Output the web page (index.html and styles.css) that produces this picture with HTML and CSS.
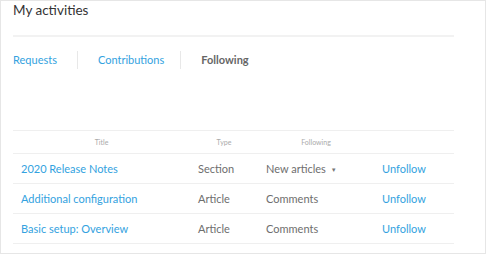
FILE: index.html
```html
<!DOCTYPE html>
<html lang="en">
<head>
    <meta charset="UTF-8">
    <meta name="viewport" content="width=device-width, initial-scale=1.0">
    <title>My activities</title>
    <link rel="stylesheet" href="styles.css">
</head>
<body>
    <div class="card">
        <h2 class="card-title">My activities</h2>
        <nav class="tabs">
            <a href="#" class="tab">Requests</a>
            <a href="#" class="tab">Contributions</a>
            <span class="tab active">Following</span>
        </nav>
        <table class="activity-table">
            <thead>
                <tr>
                    <th class="col-title">Title</th>
                    <th class="col-type">Type</th>
                    <th class="col-following">Following</th>
                    <th class="col-action"></th>
                </tr>
            </thead>
            <tbody>
                <tr>
                    <td><a href="#">2020 Release Notes</a></td>
                    <td>Section</td>
                    <td>New articles <span class="caret">&#9660;</span></td>
                    <td><a href="#">Unfollow</a></td>
                </tr>
                <tr>
                    <td><a href="#">Additional configuration</a></td>
                    <td>Article</td>
                    <td>Comments</td>
                    <td><a href="#">Unfollow</a></td>
                </tr>
                <tr>
                    <td><a href="#">Basic setup: Overview</a></td>
                    <td>Article</td>
                    <td>Comments</td>
                    <td><a href="#">Unfollow</a></td>
                </tr>
            </tbody>
        </table>
    </div>
</body>
</html>
```

FILE: styles.css
```css
body {
    font-family: Lato, "Noto Sans", sans-serif;
    background: #fff;
    margin: 0;
}
a {
    color: #33a2e0;
    text-decoration: none;
}
.card {
    box-sizing: border-box;
    height: 254px;
    border: 1px solid #e6e6e6;
    padding: 0 31px 0 12px;
}
.card-title {
    margin: 0;
    font-size: 13.5px;
    font-weight: normal;
    color: #333;
    line-height: 19px;
    padding-bottom: 15px;
    border-bottom: 2px solid #f2f2f2;
}
.tabs {
    display: flex;
    margin-top: 14px;
    line-height: 18px;
    font-size: 11px;
}
.tab {
    padding: 0 16px 0 20px;
    border-left: 1px solid #e8e8e8;
}
.tab:first-child {
    padding-left: 0;
    padding-right: 20px;
    border-left: none;
}
.tab.active {
    color: #666;
    font-weight: bold;
}
.activity-table {
    width: 100%;
    table-layout: fixed;
    margin-top: 61px;
    border-collapse: collapse;
    border-top: 1px solid #efefef;
    font-size: 11px;
    color: #6e6e6e;
}
.activity-table th,
.activity-table td {
    box-sizing: border-box;
    padding: 0 8px;
    border-bottom: 1px solid #efefef;
}
.activity-table th {
    font-size: 7px;
    font-weight: normal;
    color: #aaa;
    height: 23px;
    text-align: center;
}
.activity-table td {
    height: 30px;
}
.col-title {
    width: 177px;
}
.col-type {
    width: 68px;
}
.col-following {
    width: 116px;
}
.caret {
    font-size: 6px;
    color: #777;
    margin-left: 2px;
    vertical-align: 1px;
}
```
